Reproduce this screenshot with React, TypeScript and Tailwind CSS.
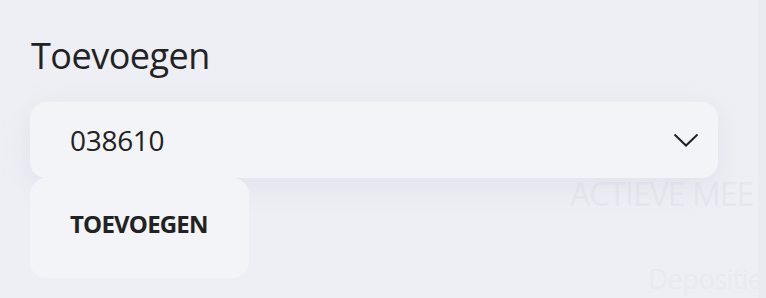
export default function App() {
  return (
    <div className="relative h-[298px] w-[766px] overflow-hidden bg-[#edeff4] font-['Open_Sans',sans-serif] text-[#222]">
      {/* faint page behind the overlay */}
      <div className="absolute left-[570px] top-[178px] text-[32px] leading-none tracking-[-1px] text-[#e5e7ee] whitespace-nowrap">ACTIEVE MEE</div>
      <div className="absolute left-[648px] top-[264px] text-[28px] leading-none tracking-[-1px] text-[#e8eaf0] whitespace-nowrap">Depositie</div>
      <div className="absolute right-0 top-0 h-full w-[8px] bg-[#e9ebf1]" />

      <div className="relative flex flex-col px-[30px] pt-[33px]">
        <h2 className="pl-[1px] text-[36px] leading-[46px] tracking-[-0.5px]">Toevoegen</h2>
        <div className="mt-[23px] flex h-[76px] w-[688px] items-center justify-between rounded-[16px] bg-[#f3f4f8] pl-[40px] pr-[18px] shadow-[0_8px_24px_rgba(200,204,222,0.35)]">
          <span className="text-[28px] tracking-[-0.3px]">038610</span>
          <svg width="26" height="14" viewBox="0 0 26 14" fill="none" className="mr-[1px]">
            <path d="M1.5 1.5 L13 12.5 L24.5 1.5" stroke="#222" strokeWidth="2" />
          </svg>
        </div>
        <button className="flex h-[100px] w-[219px] items-center rounded-[16px] bg-[#f2f4f8] pb-[9px] pl-[40px] text-[24px] font-bold tracking-[-0.8px]">
          TOEVOEGEN
        </button>
      </div>
    </div>
  )
}
